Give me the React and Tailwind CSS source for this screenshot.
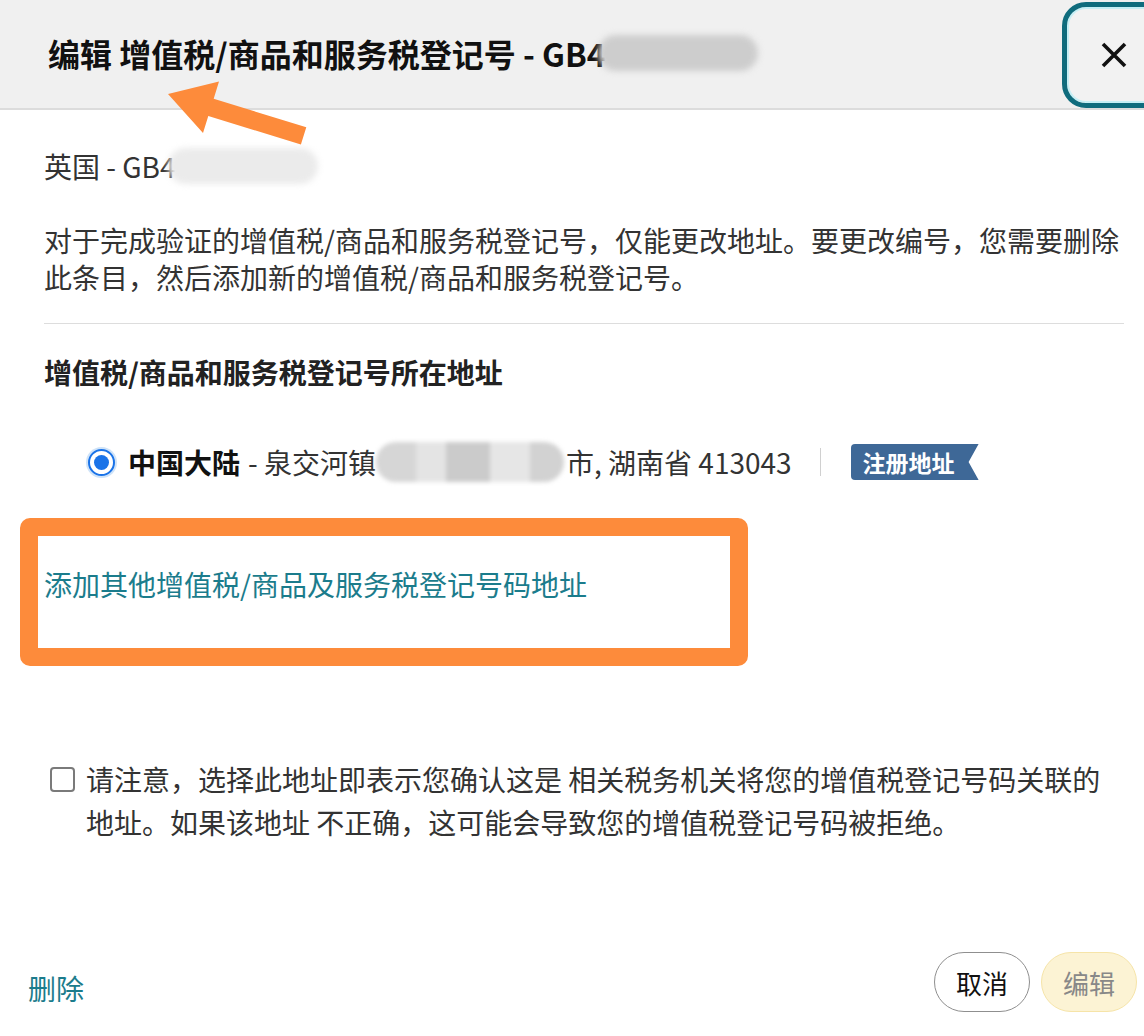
export default function App() {
  return (
    <div className="relative w-[1144px] h-[1036px] overflow-hidden bg-white text-[#333] [font-family:'Noto_Sans_CJK_SC','Noto_Sans',sans-serif]">
      <header className="flex h-[110px] items-start border-b-2 border-[#dcdcdc] bg-[#f0f0f0]">
        <h1 className="mt-[33px] flex items-center whitespace-nowrap pl-[48px] text-[32px] font-bold leading-[40px] text-[#111]">
          <span>编辑 增值税/商品和服务税登记号 - GB4</span>
          <span className="-ml-[8px] inline-block h-[36px] w-[160px] rounded-full bg-[#cdcdcd] blur-[3px]" />
        </h1>
        <button className="ml-auto mt-[2px] -mr-[22px] flex h-[106px] w-[104px] shrink-0 items-center justify-center rounded-[24px] border-[5px] border-[#0f6c7d] bg-[#f2f2f2] shadow-[inset_0_0_0_2px_#c6eff5]">
          <svg width="26" height="26" viewBox="0 0 26 26">
            <path d="M2 2 L24 24 M24 2 L2 24" stroke="#111" strokeWidth="3.6" strokeLinecap="butt" />
          </svg>
        </button>
      </header>

      <div className="pl-[44px] pr-[20px]">
        <p className="mt-[36px] flex items-center text-[28px] leading-[40px]">
          <span>英国 - GB4</span>
          <span className="-ml-[8px] inline-block h-[36px] w-[150px] rounded-full bg-[#ebebeb] blur-[3px]" />
        </p>
        <p className="mt-[36px] whitespace-nowrap text-[28px] leading-[37px]">
          对于完成验证的增值税/商品和服务税登记号，仅能更改地址。要更改编号，您需要删除
          <br />
          此条目，然后添加新的增值税/商品和服务税登记号。
        </p>
        <div className="mt-[27px] h-px bg-[#dddddd]" />
        <h2 className="mt-[28px] text-[28px] font-bold leading-[40px] text-[#222]">
          增值税/商品和服务税登记号所在地址
        </h2>

        <div className="mt-[50px] flex h-[40px] items-center whitespace-nowrap pl-[44px] text-[28px] leading-[40px]">
          <span className="flex h-[27px] w-[27px] shrink-0 items-center justify-center rounded-full border-2 border-[#1a73e8] bg-white shadow-[0_0_0_2px_#cfe3f8]">
            <span className="h-[15px] w-[15px] rounded-full bg-[#1a73e8]" />
          </span>
          <span className="ml-[13px] font-bold text-[#111]">中国大陆</span>
          <span className="ml-[8px]">- 泉交河镇</span>
          <span className="inline-flex h-[40px] w-[188px] overflow-hidden rounded-full blur-[2px]">
            <span className="w-[40px] bg-[#d6d6d6]" />
            <span className="w-[30px] bg-[#e4e4e4]" />
            <span className="w-[44px] bg-[#cbcbcb]" />
            <span className="w-[40px] bg-[#e6e6e6]" />
            <span className="w-[34px] bg-[#d2d2d2]" />
          </span>
          <span className="ml-[2px]">市, 湖南省 413043</span>
          <span className="ml-[28px] h-[28px] w-px bg-[#d0d0d0]" />
          <span className="ml-[30px] flex h-[36px] w-[128px] items-center rounded-l-[4px] bg-[#3e6897] pl-[12px] text-[23px] font-bold leading-none text-white [clip-path:polygon(0_0,100%_0,calc(100%-10px)_50%,100%_100%,0_100%)]">
            注册地址
          </span>
        </div>

        <div className="mt-[36px] -ml-[24px] h-[148px] w-[728px] rounded-[10px] border-[18px] border-[#fd8b3b] pl-[6px] pt-[28px]">
          <a className="block whitespace-nowrap text-[28px] leading-[40px] text-[#1b7c8c]">
            添加其他增值税/商品及服务税登记号码地址
          </a>
        </div>

        <div className="mt-[92px] flex pl-[6px]">
          <span className="mt-[9px] h-[25px] w-[25px] shrink-0 rounded-[4px] border-2 border-[#7a7a7a] bg-white" />
          <p className="ml-[11px] whitespace-nowrap text-[28px] leading-[43px]">
            请注意，选择此地址即表示您确认这是 相关税务机关将您的增值税登记号码关联的
            <br />
            地址。如果该地址 不正确，这可能会导致您的增值税登记号码被拒绝。
          </p>
        </div>
      </div>

      <footer className="mt-[108px] flex items-center pl-[28px] pr-[7px]">
        <a className="mt-[12px] text-[28px] leading-[40px] text-[#1b7c8c]">删除</a>
        <button className="ml-auto flex h-[60px] w-[96px] items-center justify-center rounded-full border-[1.5px] border-[#8f8f8f] bg-white text-[26px] text-[#111]">
          取消
        </button>
        <button className="ml-[11px] flex h-[60px] w-[96px] items-center justify-center rounded-full border-[1.5px] border-[#f6e4a8] bg-[#fcf3d4] text-[26px] text-[#888]">
          编辑
        </button>
      </footer>

      <svg className="absolute left-0 top-0" width="1144" height="200" viewBox="0 0 1144 200">
        <polygon
          points="168,94 219,81.5 213.7,98.7 306.3,127.3 300.9,144.5 208.3,115.9 203,133"
          fill="#fd8b3b"
        />
      </svg>
    </div>
  );
}
